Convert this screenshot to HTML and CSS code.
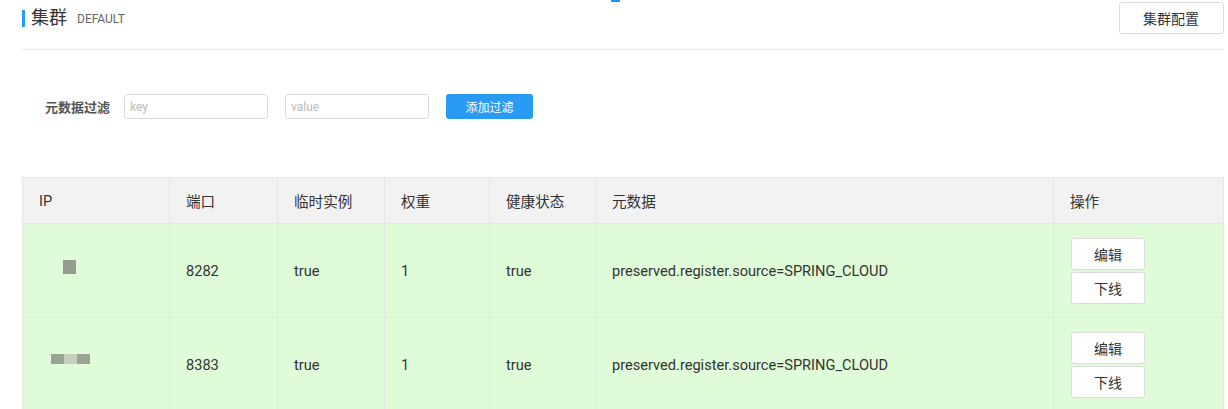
FILE: index.html
```html
<!DOCTYPE html>
<html lang="zh-CN">
	<head>
		<meta charset="UTF-8" />
		<meta name="viewport" content="width=device-width, initial-scale=1.0" />
		<title>集群</title>
		<link rel="stylesheet" href="styles.css">
	</head>
	<body>
		<div class="top-mark"></div>
		<div class="page">
			<div class="header">
				<div class="title">
					<span class="bar"></span>
					<span class="name">集群</span>
					<span class="sub">DEFAULT</span>
				</div>
				<button class="btn">集群配置</button>
			</div>

			<div class="filter">
				<label class="filter-label">元数据过滤</label>
				<input class="field" type="text" placeholder="key" />
				<input class="field" type="text" placeholder="value" />
				<button class="btn-primary">添加过滤</button>
			</div>

			<table class="grid">
				<colgroup>
					<col style="width: 147px" />
					<col style="width: 108px" />
					<col style="width: 107px" />
					<col style="width: 105px" />
					<col style="width: 106px" />
					<col style="width: 458px" />
					<col />
				</colgroup>
				<thead>
					<tr>
						<th>IP</th>
						<th>端口</th>
						<th>临时实例</th>
						<th>权重</th>
						<th>健康状态</th>
						<th>元数据</th>
						<th>操作</th>
					</tr>
				</thead>
				<tbody>
					<tr>
						<td><div class="ip-blur one"><span class="dk"></span></div></td>
						<td>8282</td>
						<td>true</td>
						<td>1</td>
						<td>true</td>
						<td>preserved.register.source=SPRING_CLOUD</td>
						<td>
							<div class="ops">
								<button class="btn small">编辑</button>
								<button class="btn small">下线</button>
							</div>
						</td>
					</tr>
					<tr>
						<td><div class="ip-blur three"><span class="dk"></span><span class="lt"></span><span class="dk"></span></div></td>
						<td>8383</td>
						<td>true</td>
						<td>1</td>
						<td>true</td>
						<td>preserved.register.source=SPRING_CLOUD</td>
						<td>
							<div class="ops">
								<button class="btn small">编辑</button>
								<button class="btn small">下线</button>
							</div>
						</td>
					</tr>
				</tbody>
			</table>
		</div>
	</body>
</html>
```

FILE: styles.css
```css
body {
	margin: 0;
	background: #fff;
	color: #333;
	font-family: Roboto, "Noto Sans CJK SC", sans-serif;
	font-size: 14px;
}
.top-mark {
	position: absolute;
	left: 611px;
	top: 0;
	width: 9px;
	height: 2px;
	background: #1e8fff;
}
.page {
	padding: 0 4px 0 22px;
}
.header {
	display: flex;
	justify-content: space-between;
	align-items: flex-start;
	height: 49px;
	border-bottom: 1px solid #e8e8e8;
}
.title {
	display: flex;
	align-items: center;
	margin-top: 8px;
}
.title .bar {
	width: 3px;
	height: 17px;
	background: #2a9bf5;
	margin-right: 6px;
}
.title .name {
	font-size: 18px;
	color: #333;
	line-height: 20px;
}
.title .sub {
	font-size: 12px;
	color: #666;
	margin-left: 10px;
	margin-top: 2px;
}
.btn {
	background: #fff;
	border: 1px solid #dcdcdc;
	border-radius: 3px;
	font-family: Roboto, "Noto Sans CJK SC", sans-serif;
	font-size: 14px;
	color: #333;
	height: 32px;
	padding: 0 24px 0 23px;
	margin-top: 2px;
	cursor: pointer;
}
.filter {
	display: flex;
	align-items: center;
	margin-top: 44px;
	height: 25px;
}
.filter-label {
	font-size: 13px;
	font-weight: bold;
	color: #555;
	margin-left: 23px;
	margin-right: 14px;
}
.field {
	box-sizing: border-box;
	width: 144px;
	height: 25px;
	border: 1px solid #dcdcdc;
	border-radius: 3px;
	padding: 0 5px;
	margin-right: 17px;
	font-family: Roboto, sans-serif;
	font-size: 12px;
	color: #333;
	outline: none;
}
.field::placeholder {
	color: #bbb;
}
.btn-primary {
	width: 87px;
	height: 25px;
	background: #2a9bf5;
	color: #fff;
	border: none;
	border-radius: 3px;
	font-family: Roboto, "Noto Sans CJK SC", sans-serif;
	font-size: 12px;
	cursor: pointer;
}
.grid {
	margin-top: 58px;
	width: 1202px;
	border-collapse: collapse;
	table-layout: fixed;
}
.grid th,
.grid td {
	border: 1px solid #e6e6e6;
	text-align: left;
	padding: 0 16px;
	font-weight: normal;
	font-size: 14.6px;
	color: #333;
}
.grid th {
	background: #f2f2f2;
	height: 45px;
}
.grid td {
	background: #e0fbd8;
	height: 93px;
}
.grid td:last-child {
	padding-left: 17px;
}
.ip-blur {
	display: flex;
	margin-bottom: 8px;
}
.ip-blur.one {
	margin-left: 24px;
}
.ip-blur.one .dk {
	width: 13px;
	height: 14px;
	background: #959c8f;
}
.ip-blur.three {
	margin-left: 12px;
	margin-bottom: 12px;
}
.ip-blur.three span {
	width: 13px;
	height: 10px;
}
.ip-blur .dk {
	background: #9aa495;
}
.ip-blur .lt {
	background: #c3d1bd;
}
.ops {
	display: flex;
	flex-direction: column;
	gap: 2px;
	width: 74px;
}
.btn.small {
	width: 74px;
	padding: 0;
	margin: 0;
	font-size: 14px;
}
```
